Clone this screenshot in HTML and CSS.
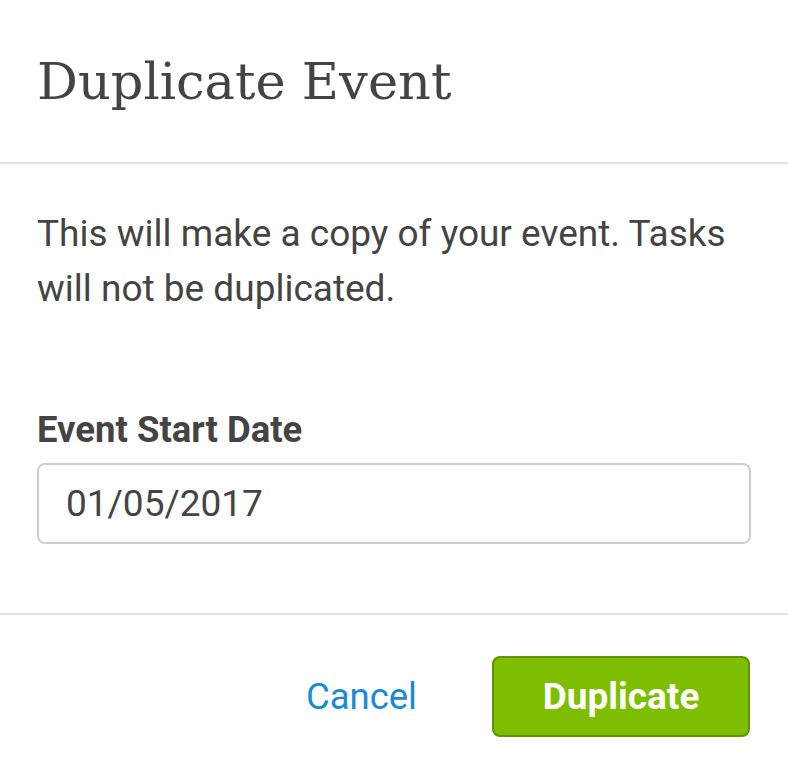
FILE: index.html
```html
<!DOCTYPE html>
<html lang="en">
<head>
    <meta charset="UTF-8">
    <meta name="viewport" content="width=device-width, initial-scale=1.0">
    <title>Duplicate Event</title>
    <link rel="stylesheet" href="styles.css">
</head>
<body>
    <div class="modal">
        <div class="modal-header">
            <h1>Duplicate Event</h1>
        </div>
        <div class="modal-body">
            <p class="intro">This will make a copy of your event. Tasks will not be duplicated.</p>
            <label class="field-label" for="startDate">Event Start Date</label>
            <input class="date-input" id="startDate" type="text" value="01/05/2017">
        </div>
        <div class="modal-footer">
            <a class="cancel-link" href="#">Cancel</a>
            <button class="btn-duplicate" type="button">Duplicate</button>
        </div>
    </div>
</body>
</html>
```

FILE: styles.css
```css
body {
    margin: 0;
    background: #fff;
    font-family: Roboto, "Liberation Sans", sans-serif;
    color: #444;
}
.modal {
    display: flex;
    flex-direction: column;
}
.modal-header {
    display: flex;
    align-items: center;
    height: 162px;
    padding: 0 37px;
    border-bottom: 2px solid #e4e4e4;
}
.modal-header h1 {
    margin: 0;
    font-family: "DejaVu Serif", "Liberation Serif", serif;
    font-weight: normal;
    font-size: 51px;
    line-height: 1;
    color: #444;
}
.modal-body {
    display: flex;
    flex-direction: column;
    padding: 42px 37px 69px;
    border-bottom: 2px solid #e4e4e4;
}
.intro {
    margin: 0 0 94px;
    font-size: 37px;
    line-height: 55px;
    max-width: 714px;
}
.field-label {
    font-size: 36.5px;
    font-weight: bold;
    line-height: 40px;
    margin-bottom: 13px;
}
.date-input {
    box-sizing: border-box;
    width: 714px;
    height: 81px;
    padding: 0 25px 0 27px;
    border: 2px solid #cfcfcf;
    border-radius: 8px;
    font-family: Roboto, "Liberation Sans", sans-serif;
    font-size: 37px;
    color: #444;
    outline: none;
}
.modal-footer {
    display: flex;
    align-items: center;
    justify-content: flex-end;
    gap: 75px;
    padding: 41px 38px;
}
.cancel-link {
    font-size: 36.5px;
    color: #1b8ad3;
    text-decoration: none;
}
.btn-duplicate {
    width: 258px;
    height: 81px;
    background: #7dbe00;
    border: 2px solid #5e9400;
    border-radius: 8px;
    color: #fff;
    font-family: Roboto, "Liberation Sans", sans-serif;
    font-size: 37px;
    font-weight: bold;
}
```
